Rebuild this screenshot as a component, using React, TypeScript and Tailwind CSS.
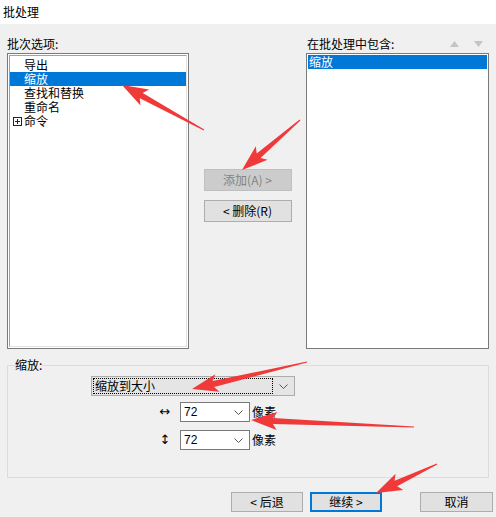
import React from 'react';

type Pt = [number, number];

// red annotation arrows: [tail, tip]
const arrows: [Pt, Pt][] = [
  [[204, 130], [122, 85]],
  [[300, 120], [242, 170]],
  [[307, 362], [192, 389]],
  [[414, 427], [251, 420]],
  [[437, 464], [376, 493]],
];

const arrowPoints = ([tx, ty]: Pt, [hx, hy]: Pt) => {
  const dx = hx - tx;
  const dy = hy - ty;
  const len = Math.hypot(dx, dy);
  const ux = dx / len;
  const uy = dy / len;
  const nx = -uy;
  const ny = ux;
  const L = 22;
  const W = 9;
  const s = 3;
  const bx = hx - ux * L;
  const by = hy - uy * L;
  const p = (x: number, y: number) => `${x.toFixed(1)},${y.toFixed(1)}`;
  return [
    p(tx + nx * 0.6, ty + ny * 0.6),
    p(bx + nx * s, by + ny * s),
    p(bx - ux * 4 + nx * W, by - uy * 4 + ny * W),
    p(hx, hy),
    p(bx - ux * 4 - nx * W, by - uy * 4 - ny * W),
    p(bx - nx * s, by - ny * s),
    p(tx - nx * 0.6, ty - ny * 0.6),
  ].join(' ');
};

const Chevron = () => (
  <svg width="9" height="5" viewBox="0 0 9 5" className="shrink-0">
    <path d="M0.5 0.5 L4.5 4.5 L8.5 0.5" fill="none" stroke="#555" strokeWidth="1" />
  </svg>
);

const Combo = () => (
  <div className="flex items-center w-[70px] h-[20px] bg-white border border-[#7a7a7a] pl-[3px] pr-[6px]">
    <span className="flex-1 font-['Segoe_UI','Liberation_Sans',sans-serif]">72</span>
    <Chevron />
  </div>
);

const Batch = () => {
  const left = ['导出', '缩放', '查找和替换', '重命名'];

  return (
    <div className="relative w-[496px] h-[517px] overflow-hidden bg-[#f0f0f0] text-[12px] text-black font-['Microsoft_YaHei','Noto_Sans_CJK_SC',sans-serif]">
      <div className="h-[24px] bg-white pl-[3px] pt-[3px] leading-[17px]">批处理</div>

      <div className="flex px-[7px] pt-[11px]">
        <div className="w-[182px]">
          <div className="h-[18px] leading-[18px]">批次选项:</div>
          <div className="h-[296px] border border-[#7a7a7a] bg-white p-px">
            <div className="h-full border border-t-[#a0a0a0] border-l-[#a0a0a0] border-r-[#e3e3e3] border-b-[#e3e3e3] pt-[2px] leading-[14px]">
              {left.map((t, i) => (
                <div key={t} className={`h-[14px] pl-[14px] ${i === 1 ? 'bg-[#0078d7] text-white' : ''}`}>{t}</div>
              ))}
              <div className="flex items-center h-[14px]">
                <div className="w-[14px] flex justify-center">
                  <svg width="9" height="9" viewBox="0 0 9 9">
                    <rect x="0.5" y="0.5" width="8" height="8" fill="white" stroke="#222" />
                    <path d="M2 4.5 H7 M4.5 2 V7" stroke="#222" />
                  </svg>
                </div>
                <span>命令</span>
              </div>
            </div>
          </div>
        </div>

        <div className="flex-1 flex flex-col items-center pt-[134px] gap-[9px]">
          <div className="w-[88px] h-[22px] flex items-center justify-center bg-[#cccccc] border border-[#bfbfbf] text-[#838383]">
            添加(A) &gt;
          </div>
          <div className="w-[88px] h-[22px] flex items-center justify-center bg-[#e1e1e1] border border-[#adadad]">
            &lt; 删除(R)
          </div>
        </div>

        <div className="w-[183px]">
          <div className="h-[18px] leading-[18px] flex items-center justify-between pl-px pr-[6px]">
            <span>在批处理中包含:</span>
            <div className="flex gap-[15px]">
              <svg width="9" height="6" viewBox="0 0 9 6"><path d="M0 6 L4.5 0 L9 6 Z" fill="#c4c4c4" /></svg>
              <svg width="9" height="6" viewBox="0 0 9 6"><path d="M0 0 L4.5 6 L9 0 Z" fill="#c4c4c4" /></svg>
            </div>
          </div>
          <div className="h-[296px] border border-[#7a7a7a] bg-white p-px leading-[14px]">
            <div className="h-[14px] pl-px bg-[#0078d7] text-white">缩放</div>
          </div>
        </div>
      </div>

      <fieldset className="mx-[7px] mt-[8px] h-[121px] border border-[#dcdcdc]">
        <legend className="ml-[7px] leading-[16px]">缩放:</legend>
        <div className="ml-[83px] mt-[3px] w-[204px] h-[20px] flex items-center bg-[#e5e5e5] border border-[#acacac] pl-px pr-[6px]">
          <div className="flex-1 h-[16px] border border-dotted border-black leading-[14px] pl-px mr-[6px]">缩放到大小</div>
          <Chevron />
        </div>
        <div className="ml-[142px] mt-[6px] grid grid-cols-[30px_auto] gap-y-[8px] items-center">
          <span className="text-center text-[13px] leading-[20px] font-['DejaVu_Sans',sans-serif]">↔</span>
          <div className="flex items-center gap-[2px]">
            <Combo />
            <span>像素</span>
          </div>
          <span className="text-center text-[13px] leading-[20px] font-['DejaVu_Sans',sans-serif]">↕</span>
          <div className="flex items-center gap-[2px]">
            <Combo />
            <span>像素</span>
          </div>
        </div>
      </fieldset>

      <div className="flex justify-end pr-[3px] mt-[14px]">
        <div className="w-[72px] h-[20px] flex items-center justify-center bg-[#e1e1e1] border border-[#adadad]">&lt; 后退</div>
        <div className="ml-[7px] w-[72px] h-[20px] flex items-center justify-center bg-[#e1e1e1] border-2 border-[#0078d7]">继续 &gt;</div>
        <div className="ml-[38px] w-[73px] h-[20px] flex items-center justify-center bg-[#e1e1e1] border border-[#adadad]">取消</div>
      </div>

      <svg className="absolute inset-0 pointer-events-none" width="496" height="517">
        {arrows.map(([a, b], i) => (
          <polygon key={i} points={arrowPoints(a, b)} fill="#f03a3a" />
        ))}
      </svg>
    </div>
  );
};

export default function App() {
  return <Batch />;
}
